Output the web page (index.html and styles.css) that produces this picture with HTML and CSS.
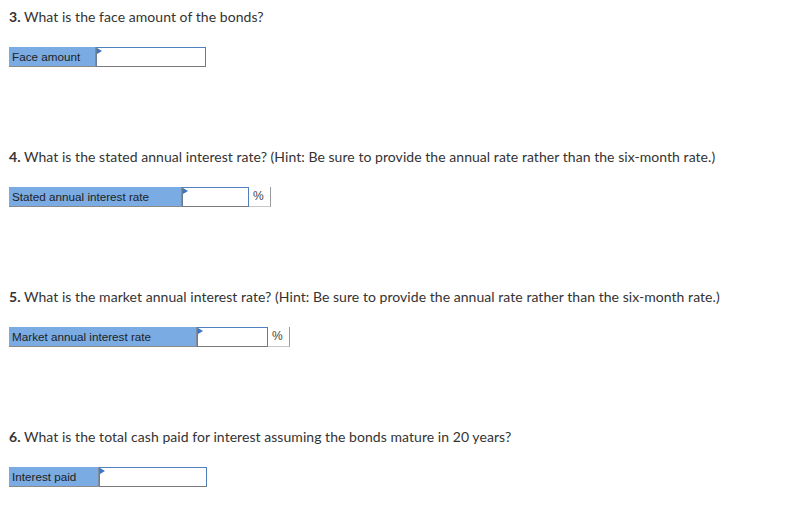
FILE: index.html
```html
<!DOCTYPE html>
<html>
<head>
<meta charset="utf-8">
<link rel="stylesheet" href="styles.css">
</head>
<body>
<div class="page">
  <section class="q">
    <p class="question"><b>3.</b> What is the face amount of the bonds?</p>
    <div class="row">
      <div class="label w1">Face amount</div>
      <div class="input i1"></div>
    </div>
  </section>
  <section class="q">
    <p class="question"><b>4.</b> What is the stated annual interest rate? (Hint: Be sure to provide the annual rate rather than the six-month rate.)</p>
    <div class="row">
      <div class="label w2">Stated annual interest rate</div>
      <div class="input i2"></div>
      <div class="unit">%</div>
    </div>
  </section>
  <section class="q">
    <p class="question"><b>5.</b> What is the market annual interest rate? (Hint: Be sure to provide the annual rate rather than the six-month rate.)</p>
    <div class="row">
      <div class="label w3">Market annual interest rate</div>
      <div class="input i3"></div>
      <div class="unit">%</div>
    </div>
  </section>
  <section class="q last">
    <p class="question"><b>6.</b> What is the total cash paid for interest assuming the bonds mature in 20 years?</p>
    <div class="row">
      <div class="label w4">Interest paid</div>
      <div class="input i4"></div>
    </div>
  </section>
</div>
</body>
</html>
```
FILE: styles.css
```css
html, body {
  margin: 0;
  padding: 0;
  background: #ffffff;
}
.page {
  padding: 8px 9px 0 9px;
}
.q {
  height: 140px;
}
.q.last {
  height: auto;
}
.question {
  margin: 0;
  font-family: Lato, "Noto Sans", sans-serif;
  font-size: 14px;
  letter-spacing: 0.05px;
  line-height: 18px;
  color: #333333;
}
.question b {
  font-weight: 700;
}
.row {
  display: flex;
  margin-top: 21px;
  height: 20px;
}
.label {
  box-sizing: border-box;
  height: 20px;
  background: #7aabe3;
  border-right: 1px solid #7f8b99;
  border-bottom: 1px solid #8a8a8a;
  font-family: "Liberation Sans", Arial, sans-serif;
  font-size: 11.7px;
  line-height: 19px;
  color: #222222;
  padding-left: 3px;
}
.w1 { width: 87px; }
.w2 { width: 173px; }
.w3 { width: 188px; }
.w4 { width: 90px; }
.input {
  position: relative;
  box-sizing: border-box;
  height: 20px;
  background: #ffffff;
  border-top: 1px solid #4f7fbf;
  border-right: 1px solid #4f7fbf;
  border-left: 1px solid #6d7d90;
  border-bottom: 1px solid #7a7a7a;
}
.input::before {
  content: "";
  position: absolute;
  left: 0;
  top: 0;
  width: 0;
  height: 0;
  border-top: 3px solid transparent;
  border-bottom: 3px solid transparent;
  border-left: 5px solid #3f74c4;
}
.i1 { width: 110px; }
.i2 { width: 67px; }
.i3 { width: 71px; }
.i4 { width: 108px; }
.unit {
  box-sizing: border-box;
  width: 22px;
  height: 20px;
  border-right: 1px solid #9a9a9a;
  border-bottom: 1px solid #c8c8c8;
  font-family: "Liberation Sans", Arial, sans-serif;
  font-size: 12px;
  line-height: 19px;
  color: #444444;
  padding-left: 4px;
}
```
